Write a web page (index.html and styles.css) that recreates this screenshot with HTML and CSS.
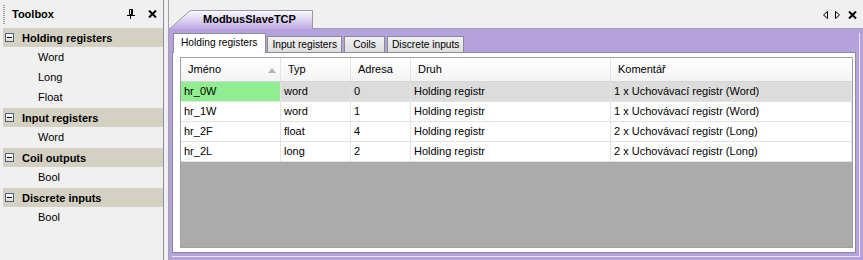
FILE: index.html
```html
<!DOCTYPE html>
<html lang="cs">
<head>
    <meta charset="UTF-8">
    <title>ModbusSlaveTCP</title>
    <link rel="stylesheet" href="styles.css">
</head>
<body>
<div class="app">
    <aside class="toolbox">
        <div class="toolbox-title">
            <span class="grip"></span>
            <span class="toolbox-name">Toolbox</span>
            <svg class="pin" width="8" height="10" viewBox="0 0 8 10">
                <path d="M2.5 0.5h3v5h-3z" fill="none" stroke="#000"/>
                <path d="M4.5 1v5" stroke="#000"/>
                <path d="M0 6.5h8" stroke="#000"/>
                <path d="M3.5 7v3" stroke="#000"/>
            </svg>
            <svg class="close" width="9" height="8" viewBox="0 0 9 8">
                <path d="M1 0.5l7 7M8 0.5l-7 7" stroke="#000" stroke-width="2"/>
            </svg>
        </div>

        <div class="group">
            <div class="group-head"><span class="minus"></span>Holding registers</div>
            <div class="item">Word</div>
            <div class="item">Long</div>
            <div class="item">Float</div>
        </div>
        <div class="group">
            <div class="group-head"><span class="minus"></span>Input registers</div>
            <div class="item">Word</div>
        </div>
        <div class="group">
            <div class="group-head"><span class="minus"></span>Coil outputs</div>
            <div class="item">Bool</div>
        </div>
        <div class="group">
            <div class="group-head"><span class="minus"></span>Discrete inputs</div>
            <div class="item">Bool</div>
        </div>
    </aside>

    <main class="document">
        <div class="doc-strip">
            <div class="doc-tab">
                <svg class="doc-tab-shape" width="145" height="19" viewBox="0 0 145 19">
                    <defs>
                        <linearGradient id="tabfill" x1="0" y1="0" x2="0" y2="1">
                            <stop offset="0" stop-color="#fdfcff"/>
                            <stop offset="1" stop-color="#bfabe4"/>
                        </linearGradient>
                    </defs>
                    <path d="M0.5 19L20 1.5Q21 0.5 23 0.5H143.5V19" fill="url(#tabfill)" stroke="#9a97a6"/>
                </svg>
                <span class="doc-tab-text">ModbusSlaveTCP</span>
            </div>
            <div class="doc-buttons">
                <svg width="5" height="8" viewBox="0 0 5 8"><path d="M4.5 0.5v7L0.5 4z" fill="none" stroke="#000"/></svg>
                <svg width="5" height="8" viewBox="0 0 5 8"><path d="M0.5 0.5v7L4.5 4z" fill="none" stroke="#000"/></svg>
                <svg width="9" height="8" viewBox="0 0 9 8"><path d="M1 0.5l7 7M8 0.5l-7 7" stroke="#000" stroke-width="2"/></svg>
            </div>
        </div>

        <div class="doc-body">
            <div class="tab-control">
                <div class="tabs">
                    <div class="tab active">Holding registers</div>
                    <div class="tab">Input registers</div>
                    <div class="tab">Coils</div>
                    <div class="tab">Discrete inputs</div>
                </div>
                <div class="tab-page">
                    <div class="grid">
                        <div class="grid-head">
                            <div class="hcell sorted">Jméno<span class="sort-arrow"></span></div>
                            <div class="hcell">Typ</div>
                            <div class="hcell">Adresa</div>
                            <div class="hcell">Druh</div>
                            <div class="hcell">Komentář</div>
                        </div>
                        <div class="grid-row selected">
                            <div class="cell current">hr_0W</div>
                            <div class="cell">word</div>
                            <div class="cell">0</div>
                            <div class="cell">Holding registr</div>
                            <div class="cell">1 x Uchovávací registr (Word)</div>
                        </div>
                        <div class="grid-row">
                            <div class="cell">hr_1W</div>
                            <div class="cell">word</div>
                            <div class="cell">1</div>
                            <div class="cell">Holding registr</div>
                            <div class="cell">1 x Uchovávací registr (Word)</div>
                        </div>
                        <div class="grid-row">
                            <div class="cell">hr_2F</div>
                            <div class="cell">float</div>
                            <div class="cell">4</div>
                            <div class="cell">Holding registr</div>
                            <div class="cell">2 x Uchovávací registr (Long)</div>
                        </div>
                        <div class="grid-row">
                            <div class="cell">hr_2L</div>
                            <div class="cell">long</div>
                            <div class="cell">2</div>
                            <div class="cell">Holding registr</div>
                            <div class="cell">2 x Uchovávací registr (Long)</div>
                        </div>
                    </div>
                </div>
            </div>
        </div>
    </main>
</div>
</body>
</html>
```

FILE: styles.css
```css
* {
    box-sizing: border-box;
}
body {
    margin: 0;
    font-family: "Liberation Sans", Arial, sans-serif;
    font-size: 11px;
    color: #000;
    background-color: #f0f0f0;
}
.app {
    display: flex;
    width: 863px;
    height: 260px;
}

/* toolbox */
.toolbox {
    width: 164px;
    border-right: 1px solid #8e8e9c;
}
.toolbox-title {
    height: 28px;
    display: flex;
    align-items: center;
    padding-left: 3px;
}
.grip {
    width: 2px;
    height: 19px;
    background-image: linear-gradient(#9a9a9a 50%, transparent 50%);
    background-size: 2px 2px;
}
.toolbox-name {
    font-weight: bold;
    margin-left: 7px;
}
.pin {
    margin-left: auto;
}
.close {
    margin-left: 13px;
    margin-right: 6px;
}
.group-head {
    height: 20px;
    margin-left: 3px;
    display: flex;
    align-items: center;
    padding-left: 2px;
    background-color: #d4d1c2;
    font-weight: bold;
    border-bottom: 1px solid #f0f0f0;
}
.minus {
    width: 9px;
    height: 9px;
    margin-right: 8px;
    border: 1px solid #4d6185;
    background: linear-gradient(#ffffff, #dcdcd4);
    position: relative;
}
.minus::after {
    content: "";
    position: absolute;
    left: 1px;
    top: 3px;
    width: 5px;
    height: 1px;
    background-color: #000;
}
.item {
    height: 20px;
    line-height: 19px;
    padding-left: 38px;
}

/* document */
.document {
    flex: 1;
    margin-left: 4px;
    border-left: 1px solid #a0a0a8;
    display: flex;
    flex-direction: column;
}
.doc-strip {
    height: 29px;
    border-bottom: 1px solid #a0a0a8;
    display: flex;
    align-items: flex-end;
}
.doc-tab {
    position: relative;
    width: 145px;
    height: 19px;
    margin-bottom: -1px;
    padding-left: 34px;
    font-weight: bold;
    line-height: 18px;
}
.doc-tab-shape {
    position: absolute;
    left: 0;
    top: 0;
}
.doc-tab-text {
    position: relative;
}
.doc-buttons {
    margin-left: auto;
    align-self: center;
    display: flex;
    align-items: center;
    gap: 7px;
    padding-right: 6px;
    margin-top: 1px;
}
.doc-buttons svg:last-child {
    margin-left: 1px;
}
.doc-body {
    flex: 1;
    background-color: #b4a1dd;
    padding: 4px 3px 3px 3px;
    display: flex;
}
.tab-control {
    flex: 1;
    display: flex;
    flex-direction: column;
    padding: 0 3px 3px 0;
    border-right: 1px solid #ebe6f6;
    border-bottom: 1px solid #ebe6f6;
}
.tabs {
    display: flex;
    align-items: flex-end;
    height: 19px;
    padding-left: 1px;
}
.tab {
    height: 16px;
    min-width: 41px;
    line-height: 15px;
    padding: 0 4px;
    margin-right: 2px;
    text-align: center;
    font-size: 10.2px;
    border: 1px solid #8b8d96;
    border-bottom: none;
    background: linear-gradient(#f2f2f2, #dedede);
}
.tab.active {
    height: 20px;
    line-height: 18px;
    margin-bottom: -1px;
    margin-right: 1px;
    padding: 0 8px 0 7px;
    background: #fff;
    position: relative;
    z-index: 1;
}
.tab-page {
    flex: 1;
    border: 1px solid #8b8d96;
    background-color: #fff;
    padding: 4px 2px 4px 7px;
}

/* grid */
.grid {
    height: 100%;
    border: 1px solid #a0a0a0;
    background-color: #ababab;
}
.grid-head,
.grid-row {
    display: grid;
    grid-template-columns: 100px 70px 60px 200px 1fr;
}
.grid-head {
    height: 24px;
    border-bottom: 1px solid #d5d5d5;
    background: linear-gradient(#ffffff, #f3f3f4);
}
.hcell {
    padding-left: 7px;
    line-height: 22px;
    border-right: 1px solid #e3e4e6;
    position: relative;
}
.hcell:last-child {
    border-right: none;
}
.sort-arrow {
    position: absolute;
    right: 4px;
    top: 10px;
    width: 0;
    height: 0;
    border-left: 4px solid transparent;
    border-right: 4px solid transparent;
    border-bottom: 5px solid #b4b4b4;
}
.grid-row {
    height: 20px;
    background-color: #fff;
    border-bottom: 1px solid #e3e3e3;
}
.cell {
    padding-left: 3px;
    line-height: 19px;
    border-right: 1px solid #e3e3e3;
    white-space: nowrap;
}
.grid-row.selected {
    background-color: #dcdcdc;
}
.cell.current {
    background-color: #90ee90;
}
```
